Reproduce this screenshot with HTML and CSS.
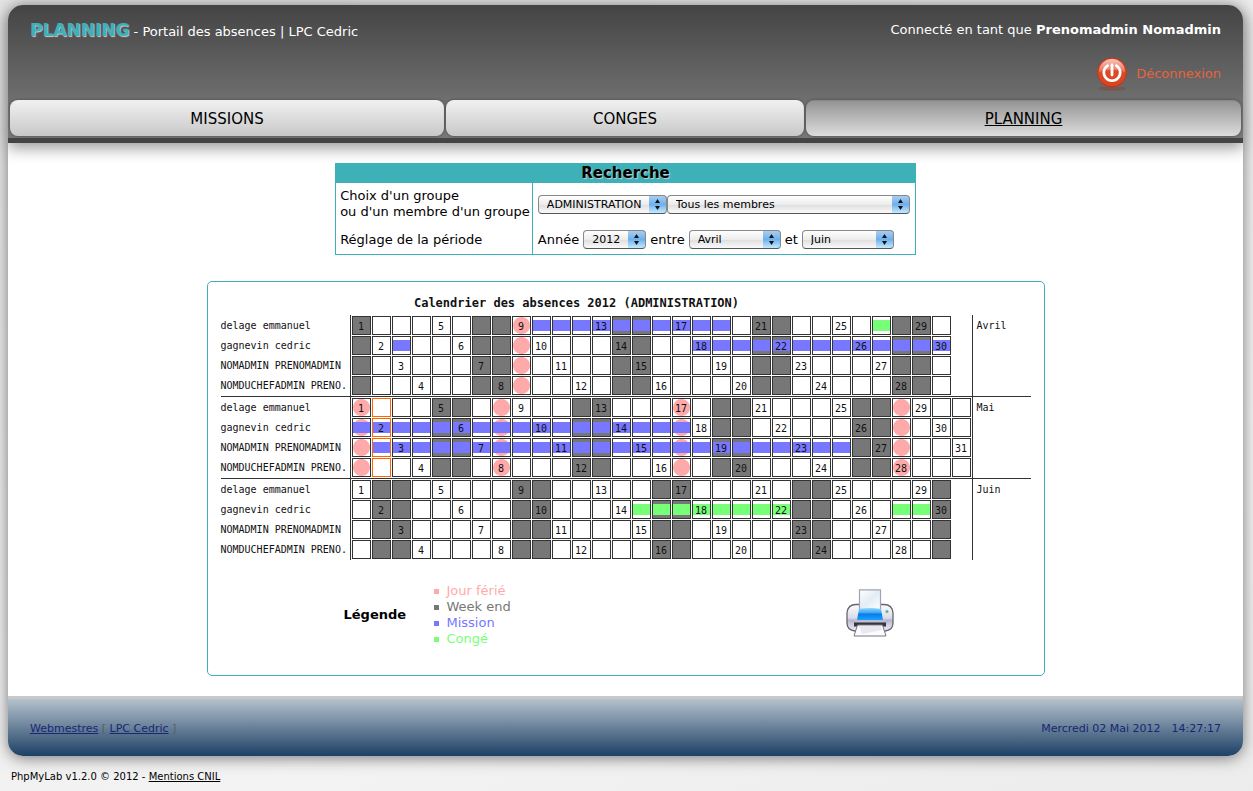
FILE: index.html
```html
<!DOCTYPE html>
<html lang="fr">
<head>
<meta charset="utf-8">
<title>Planning - Portail des absences</title>
<link rel="stylesheet" href="styles.css">
</head>
<body>
<div class="page">
  <header class="header">
    <div class="header-top">
      <h1 class="brand"><span class="brand-name">PLANNING</span> - Portail des absences | LPC Cedric</h1>
      <div class="session">
        <p class="user">Connecté en tant que <strong>Prenomadmin Nomadmin</strong></p>
        <a class="logout" href="#">
          <svg class="power" viewBox="0 0 32 34" aria-hidden="true">
            <defs>
              <linearGradient id="ball" x1="0" y1="0" x2="0" y2="1">
                <stop offset="0" stop-color="#ee6a4c"/><stop offset=".5" stop-color="#dd4a26"/><stop offset="1" stop-color="#d8431c"/>
              </linearGradient>
              <linearGradient id="gloss" x1="0" y1="0" x2="0" y2="1">
                <stop offset="0" stop-color="#fff" stop-opacity=".6"/><stop offset="1" stop-color="#fff" stop-opacity=".2"/>
              </linearGradient>
            </defs>
            <ellipse cx="16" cy="31.500" rx="14" ry="2" fill="#8a3a28" opacity=".4"/>
            <circle cx="16" cy="15.500" r="14.500" fill="url(#ball)" stroke="#b5371a"/>
            <path d="M3 15a13 13 0 0 1 26 0q-13-5-26 0z" fill="url(#gloss)"/>
            <path d="M11.700 8.600a8.200 8.200 0 1 0 8.600 0" fill="none" stroke="#fff" stroke-width="2.600" stroke-linecap="round"/>
            <path d="M16 8v10" stroke="#fff" stroke-width="2.800" stroke-linecap="round"/>
          </svg>
          Déconnexion</a>
      </div>
    </div>
    <nav class="tabs">
      <a class="tab" href="#">MISSIONS</a>
      <a class="tab" href="#">CONGES</a>
      <a class="tab current" href="#" aria-current="page">PLANNING</a>
    </nav>
  </header>

  <main class="main">
    <form class="search">
      <h2 class="search-title">Recherche</h2>
      <div class="search-labels">
        <label for="groupe">Choix d'un groupe<br>ou d'un membre d'un groupe</label>
        <label for="annee">Réglage de la période</label>
      </div>
      <div class="search-fields">
        <div class="field-row">
          <select class="select group" id="groupe"><option>ADMINISTRATION</option></select>
          <select class="select member" aria-label="Membre"><option>Tous les membres</option></select>
        </div>
        <div class="field-row spaced">
          <label for="annee">Année</label>
          <select class="select year" id="annee"><option>2012</option></select>
          <label for="debut">entre</label>
          <select class="select month-pick" id="debut"><option>Avril</option></select>
          <label for="fin">et</label>
          <select class="select month-pick" id="fin"><option>Juin</option></select>
        </div>
      </div>
    </form>

    <section class="panel">
      <table class="calendar" id="calendar">
        <caption>Calendrier des absences 2012 (ADMINISTRATION)</caption>
      </table>
      <div class="panel-foot">
        <div class="legend">
          <h3 class="legend-title">Légende</h3>
          <ul class="legend-list">
            <li class="l-holiday">Jour férié</li>
            <li class="l-weekend">Week end</li>
            <li class="l-mission">Mission</li>
            <li class="l-leave">Congé</li>
          </ul>
        </div>
        <button class="print" type="button" aria-label="Imprimer">
          <svg viewBox="0 0 48 48" aria-hidden="true">
            <defs>
              <linearGradient id="casing" x1="0" y1="0" x2="0" y2="1">
                <stop offset="0" stop-color="#fdfdff"/><stop offset=".5" stop-color="#dcdcea"/><stop offset=".6" stop-color="#b9b9d2"/><stop offset="1" stop-color="#efeff6"/>
              </linearGradient>
              <linearGradient id="tray" x1="0" y1="0" x2="0" y2="1">
                <stop offset="0" stop-color="#8fd4fb"/><stop offset=".4" stop-color="#3ea6f6"/><stop offset=".5" stop-color="#0a79e8"/><stop offset="1" stop-color="#19a4ff"/>
              </linearGradient>
              <linearGradient id="sheet" x1="0" y1="0" x2="1" y2="1">
                <stop offset="0" stop-color="#fff"/><stop offset=".5" stop-color="#e3edf5"/><stop offset="1" stop-color="#fff"/>
              </linearGradient>
            </defs>
            <path d="M10 15.500C4 15.500 1.500 18 1 24v10c0 5 3 7.500 8 8h30c5-.5 8-3 8-8V24c-.5-6-3-8.500-9-8.500z" fill="url(#casing)" stroke="#66666e" stroke-width="1.300"/>
            <path d="M3 31q7 3 9 3h24q2 0 9-3" fill="none" stroke="#b4b4c6"/>
            <path d="M13.500.8h21v20h-21z" fill="url(#sheet)" stroke="#a2a2b4" stroke-width="1.200"/>
            <path d="M13 20q11-2 22 0l2 11H11z" fill="url(#tray)"/>
            <circle cx="41" cy="22.500" r="1.500" fill="#52b894"/>
            <path d="M8 33.500h32v4H8z" fill="#35353d"/>
            <path d="M11.500 36h25L40 47H8z" fill="#fcfcff" stroke="#77777f"/>
            <path d="M13 37h22l1 4-20 4z" fill="#dfdfe9" opacity=".7"/>
          </svg>
        </button>
      </div>
    </section>
  </main>

  <footer class="footer">
    <p class="webmasters"><a href="#">Webmestres</a> [ <a href="#">LPC Cedric</a> ]</p>
    <p class="clock"><span>Mercredi 02 Mai 2012</span><span>14:27:17</span></p>
  </footer>
</div>
<p class="credits">PhpMyLab v1.2.0 © 2012 - <a href="#">Mentions CNIL</a></p>
<script src="calendar.js"></script>
</body>
</html>
```
FILE: styles.css
```css
* { box-sizing: border-box; }

body {
  margin: 0;
  padding: 5px 10px 0 8px;
  min-height: 100vh;
  background: linear-gradient(160deg, #e4e4e4 0%, #f3f3f3 70%, #ececec 100%);
  color: #000;
  font: 13px/16px Verdana, "DejaVu Sans", sans-serif;
}

h1, h2, h3, p, ul { margin: 0; padding: 0; }

.page {
  border-radius: 15px;
  background: #fff;
  box-shadow: 0 2px 15px #777;
}

.header {
  position: relative;
  border-bottom: 5px solid #444;
  border-radius: 15px 15px 0 0;
  background: linear-gradient(#444, #777 85%);
  box-shadow: 0 5px 15px #999;
  color: #fff;
}

.header-top {
  display: flex;
  justify-content: space-between;
  min-height: 95px;
  padding: 16px 22px 0;
}

.brand { font-size: 13px; font-weight: normal; line-height: 18px; }

.brand-name {
  color: #3eb1b8;
  font-size: 17px;
  font-weight: bold;
  text-shadow: 1px 1px 1px #ccc;
}

.session { display: flex; flex-direction: column; align-items: flex-end; gap: 18px; }
.user { line-height: 18px; }

.logout {
  display: flex;
  align-items: center;
  gap: 8px;
  color: #e8633b;
  text-decoration: none;
}

.power { width: 32px; height: 34px; }

.tabs {
  display: grid;
  grid-template-columns: 434fr 358fr 435fr;
  gap: 2px;
  padding: 0 2px 2px;
}

.tab {
  padding: 8px 0 7px;
  border-top: 1px solid #eee;
  border-radius: 8px;
  background: linear-gradient(#f0f0f0, #c8c8c8);
  box-shadow: 0 0 3px #444;
  color: #000;
  font-size: 15px;
  line-height: 20px;
  text-align: center;
  text-decoration: none;
}

.tab.current {
  border-top-color: #888;
  background: linear-gradient(#949494, #ddd);
  text-decoration: underline;
}

.main {
  display: flex;
  flex-direction: column;
  align-items: center;
  gap: 26px;
  padding: 20px 0;
}

.search {
  display: grid;
  grid-template-columns: auto 382px;
  border: 1px solid #3eb1b8;
}

.search-title {
  grid-column: 1 / -1;
  background: #3eb1b8;
  font-size: 15px;
  line-height: 19px;
  text-align: center;
  text-shadow: 1px 1px 1px #ccc;
}

.search-labels {
  display: flex;
  flex-direction: column;
  gap: 12px;
  padding: 5px 2px 5px 4px;
  border-right: 1px solid #3eb1b8;
}

.search-fields { padding: 12px 5px 5px; }
.field-row { display: flex; align-items: center; }
.spaced { gap: 4px; margin-top: 16px; }

.select {
  height: 19px;
  margin: 0;
  padding: 0 24px 0 8px;
  border: 1px solid #888;
  border-bottom-color: #555;
  border-radius: 4px;
  appearance: none;
  background:
    url("data:image/svg+xml,%3Csvg xmlns='http://www.w3.org/2000/svg' width='17' height='17'%3E%3ClinearGradient id='g' x2='0' y2='1'%3E%3Cstop stop-color='%23a9cdf2'/%3E%3Cstop offset='.5' stop-color='%236fb0ec'/%3E%3Cstop offset='1' stop-color='%23c4ebff'/%3E%3C/linearGradient%3E%3Cpath fill='url(%23g)' d='M0 0h17v17H0z'/%3E%3Cpath fill='%23111' d='M6 7l2.500-4 2.500 4zM6 10l2.500 4 2.500-4z'/%3E%3C/svg%3E") right top / 17px 17px no-repeat,
    linear-gradient(#fff, #ececec 50%, #e0e0e0 55%, #fafafa);
  color: #000;
  font: 11px/16px "Lucida Grande", "DejaVu Sans", sans-serif;
}

.group { width: 129px; padding-right: 17px; }
.member { width: 243px; }
.year { width: 63px; }
.month-pick { width: 92px; }

.panel {
  width: 838px;
  padding: 13px 13px 28px;
  border: 1px solid #3eb1b8;
  border-radius: 5px;
}

.calendar {
  width: 810px;
  border-spacing: 0;
  table-layout: fixed;
  color: #111;
  font: 10px/19px "DejaVu Sans Mono", monospace;
}

.calendar caption {
  padding: 1px 98px 4px 0;
  font-size: 12px;
  font-weight: bold;
  line-height: 15px;
}

.col-name { width: 130px; }
.col-day { width: 20px; }
.col-last { width: 21px; }

.calendar th { padding: 1px 0 0; font-weight: normal; text-align: left; }
.calendar td { padding: 1px 0 0 1px; }
.calendar .name { border-right: 1px solid #333; white-space: nowrap; }
.calendar .month { padding-left: 4px; border-left: 1px solid #333; vertical-align: top; }
.calendar tbody tr:last-child > * { padding-bottom: 1px; }
.calendar tbody + tbody tr:first-child > * { border-top: 1px solid #333; }

.day {
  display: block;
  width: 19px;
  height: 19px;
  border: 1px solid #333;
  line-height: 19px;
  text-align: center;
  --bar: transparent;
  --dot: transparent;
  background:
    linear-gradient(transparent 3px, var(--bar) 3px 14px, transparent 14px) padding-box,
    radial-gradient(circle, var(--dot) 8px, transparent 9px) padding-box;
}

.weekend { background-color: #777; }
.holiday { --dot: #faa; }
.mission { --bar: #77f; }
.leave { --bar: #7f7; }
.today { border-color: #f60; }

.panel-foot {
  display: flex;
  align-items: flex-start;
  justify-content: space-between;
  padding: 23px 137px 0 123px;
}

.legend { display: flex; align-items: center; }
.legend-title { width: 90px; font-size: 13px; }
.legend-list { list-style: none; }

.legend-list li { display: flex; align-items: center; gap: 8px; }
.legend-list li::before { width: 5px; height: 5px; background: currentColor; content: ""; }

.l-holiday { color: #faa; }
.l-weekend { color: #777; }
.l-mission { color: #77f; }
.l-leave { color: #7f7; }

.print {
  width: 48px;
  height: 48px;
  margin-top: 6px;
  padding: 0;
  border: 0;
  background: none;
}

.print svg { display: block; }

.footer {
  display: flex;
  align-items: center;
  justify-content: space-between;
  min-height: 60px;
  padding: 2px 22px 0;
  border-top: 3px solid #c8c8c8;
  border-radius: 0 0 15px 15px;
  background: linear-gradient(#b4c2cd, #1d4066);
  color: #5c5c5c;
  font-size: 11px;
}

.footer a, .clock { color: #1a2672; }
.clock { display: flex; gap: 11px; }

.credits { padding: 13px 3px 5px; font-size: 10px; }
.credits a { color: #000; }
```
FILE: calendar.js
```js
const people = ["delage emmanuel", "gagnevin cedric", "NOMADMIN PRENOMADMIN", "NOMDUCHEFADMIN PRENO."];

// Each absence is [person index, first day, last day, kind].
const months = [
  { name: "Avril", number: 3, days: 30, holidays: [9],
    absences: [[0, 10, 19, "mission"], [0, 27, 27, "leave"], [1, 3, 3, "mission"], [1, 18, 30, "mission"]] },
  { name: "Mai", number: 4, days: 31, holidays: [1, 8, 17, 28], today: 2,
    absences: [[1, 1, 17, "mission"], [2, 2, 25, "mission"]] },
  { name: "Juin", number: 5, days: 30, holidays: [],
    absences: [[1, 15, 22, "leave"], [1, 28, 29, "leave"]] }
];

function dayClasses(month, person, day) {
  const classes = ["day"];
  const weekday = new Date(2012, month.number, day).getDay();
  if (weekday === 0 || weekday === 6) classes.push("weekend");
  if (month.holidays.includes(day)) classes.push("holiday");
  if (month.today === day) classes.push("today");
  for (const [who, first, last, kind] of month.absences) {
    if (who === person && day >= first && day <= last) classes.push(kind);
  }
  return classes.join(" ");
}

function personRow(month, name, person) {
  let html = `<tr><th class="name" scope="row">${name}</th>`;
  for (let day = 1; day <= 31; day++) {
    // Day numbers step down one row per day.
    const label = (day - 1) % people.length === person ? day : "";
    html += day <= month.days
      ? `<td><span class="${dayClasses(month, person, day)}">${label}</span></td>`
      : "<td></td>";
  }
  if (person === 0) html += `<th class="month" rowspan="${people.length}">${month.name}</th>`;
  return html + "</tr>";
}

document.getElementById("calendar").insertAdjacentHTML("beforeend",
  '<colgroup><col class="col-name"><col class="col-day" span="30"><col class="col-last"><col></colgroup>' +
  months.map(month => `<tbody>${people.map((name, i) => personRow(month, name, i)).join("")}</tbody>`).join(""));
```
